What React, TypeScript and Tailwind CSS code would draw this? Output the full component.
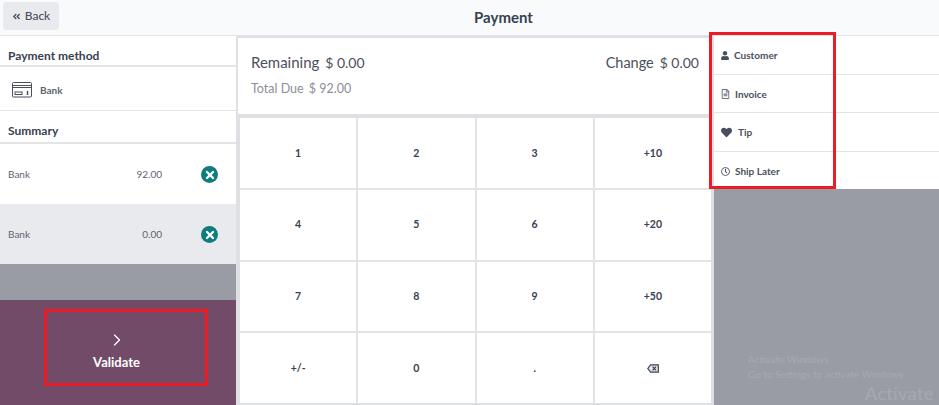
import { ChevronRight, X } from 'lucide-react';
import { FaAngleDoubleLeft, FaHeart, FaRegClock, FaRegFileAlt, FaUser } from 'react-icons/fa';

const keys = ['1', '2', '3', '+10', '4', '5', '6', '+20', '7', '8', '9', '+50', '+/-', '0', '.', 'back'];

function BankIcon() {
  return (
    <svg width="21" height="16" viewBox="0 0 21 16" fill="none" stroke="#4b4f5c" strokeWidth="1">
      <rect x="0.5" y="0.5" width="19" height="14.5" rx="1" />
      <path d="M0.5 3.5h19M0.5 5.5h19" />
      <rect x="3" y="10" width="7" height="2.5" />
      <path d="M15.5 9v4" strokeWidth="1.5" />
    </svg>
  );
}

function BackspaceIcon() {
  return (
    <svg width="12" height="9" viewBox="0 0 12 9" fill="none" stroke="#374151" strokeWidth="1.2">
      <path d="M0.8 4.5 3.6 0.8H11.3V8.2H3.6Z" fill="#e5e7eb" />
      <path d="M5.6 2.6 9 6.4M9 2.6 5.6 6.4" />
    </svg>
  );
}

function SummaryRow({ amount, active }: { amount: string; active?: boolean }) {
  return (
    <div className={`flex-1 flex items-center pl-2 pr-[18px] pt-[1px] text-[10px] text-[#5f636f] ${active ? 'bg-[#e9eaed]' : 'bg-white'}`}>
      <span className="flex-1">Bank</span>
      <span className="mr-[39px]">{amount}</span>
      <span className="w-[17px] h-[17px] rounded-full bg-[#0f7d7d] flex items-center justify-center">
        <X size={12} strokeWidth={4.5} className="text-white" />
      </span>
    </div>
  );
}

function SideRow({ icon, label }: { icon: React.ReactNode; label: string }) {
  return (
    <div className="flex-1 flex items-center gap-[5px] pl-[7px] pt-[2px] border-b border-[#e3e4e7] last:border-b-0 text-[10px] font-bold text-[#4b4f5c]">
      {icon}
      <span>{label}</span>
    </div>
  );
}

export default function App() {
  return (
    <div className="relative w-[939px] h-[405px] overflow-hidden flex flex-col bg-[#dfe0e3] font-['Lato',sans-serif]">
      {/* Header */}
      <div className="h-[36px] shrink-0 flex items-center bg-[#f9fafb] border-b border-[#e3e4e7] px-[3px]">
        <button className="w-[56px] h-[28px] -mt-[3px] rounded-[3px] bg-[#e9eaed] flex items-center justify-center gap-[4px] text-[12px] font-medium text-[#4b4f5c]">
          <FaAngleDoubleLeft size={9} />
          Back
        </button>
        <div className="flex-1 text-center text-[15px] font-bold text-[#374151] -mt-[1px] pl-[12px]">Payment</div>
      </div>

      <div className="flex-1 flex min-h-0">
        {/* Left column */}
        <div className="w-[236px] shrink-0 flex flex-col">
          <div className="h-[31px] flex items-center pl-2 pt-[10px] text-[12px] font-bold text-[#374151] bg-white border-b-2 border-[#e3e4e7]">Payment method</div>
          <div className="h-[44px] flex items-center pl-3 pt-[3px] gap-[7px] text-[10px] font-bold text-[#5f636f] bg-white border-b border-[#e3e4e7]">
            <BankIcon />
            <span>Bank</span>
          </div>
          <div className="h-[33px] flex items-center pl-2 pt-[8px] text-[12px] font-bold text-[#374151] bg-white border-b-2 border-[#e3e4e7]">Summary</div>
          <div className="h-[120px] flex flex-col">
            <SummaryRow amount="92.00" />
            <SummaryRow amount="0.00" active />
          </div>
          <div className="h-[36px] bg-[#9a9ca5]" />
          <div className="flex-1 bg-[#714b67] flex flex-col items-center justify-center pb-[2px] pr-[3px] text-white">
            <ChevronRight size={20} strokeWidth={1.5} />
            <span className="mt-[3px] text-[13px] font-bold">Validate</span>
          </div>
        </div>

        {/* Center column */}
        <div className="w-[474px] shrink-0 ml-[2px] flex flex-col">
          <div className="h-[76px] mt-[2px] shrink-0 bg-white px-[13px] pt-[14px] text-[#4b4f5c]">
            <div className="flex justify-between text-[15px] leading-[20px]">
              <span>
                Remaining <span className="ml-[2px] text-[14px]">$ 0.00</span>
              </span>
              <span>
                <span className="text-[14.5px]">Change</span> <span className="ml-[2px] text-[14px]">$ 0.00</span>
              </span>
            </div>
            <div className="mt-[7px] text-[12.5px] leading-[18px] text-[#8b8e98]">
              Total Due <span className="ml-[2px]">$ 92.00</span>
            </div>
          </div>
          <div className="mt-[4px] h-[285px] ml-[2px] w-[471px] grid grid-cols-4 grid-rows-4 gap-[2px] bg-[#e3e4e7]">
            {keys.map((k) => (
              <div key={k} className="bg-white flex items-center justify-center pt-[1px] text-[10.5px] font-bold text-[#374151]">
                {k === 'back' ? <BackspaceIcon /> : k}
              </div>
            ))}
          </div>
        </div>

        {/* Right column */}
        <div className="flex-1 ml-[2px] flex flex-col">
          <div className="h-[153px] bg-white flex flex-col">
            <SideRow icon={<FaUser size={9} className="w-[8px]" />} label="Customer" />
            <SideRow icon={<FaRegFileAlt size={10} className="w-[9px] text-[#6b6e78]" />} label="Invoice" />
            <SideRow icon={<FaHeart size={11} className="mr-[1px]" />} label="Tip" />
            <SideRow icon={<FaRegClock size={9} />} label="Ship Later" />
          </div>
          <div className="flex-1 bg-[#9a9ca5]" />
        </div>
      </div>

      {/* Red annotation boxes */}
      <div className="absolute left-[709px] top-[32px] w-[127px] h-[157px] border-[3px] border-[#ed1c24]" />
      <div className="absolute left-[44px] top-[309px] w-[164px] h-[77px] border-[3px] border-[#ed1c24]" />

      {/* Windows watermark */}
      <div className="absolute left-[748px] top-[352px] text-[10px] leading-[15px] text-white/15">
        <div>Activate Windows</div>
        <div>Go to Settings to activate Windows.</div>
      </div>
      <div className="absolute left-[865px] top-[383px] text-[18px] leading-[20px] tracking-wide text-white/15">Activate</div>
    </div>
  );
}
